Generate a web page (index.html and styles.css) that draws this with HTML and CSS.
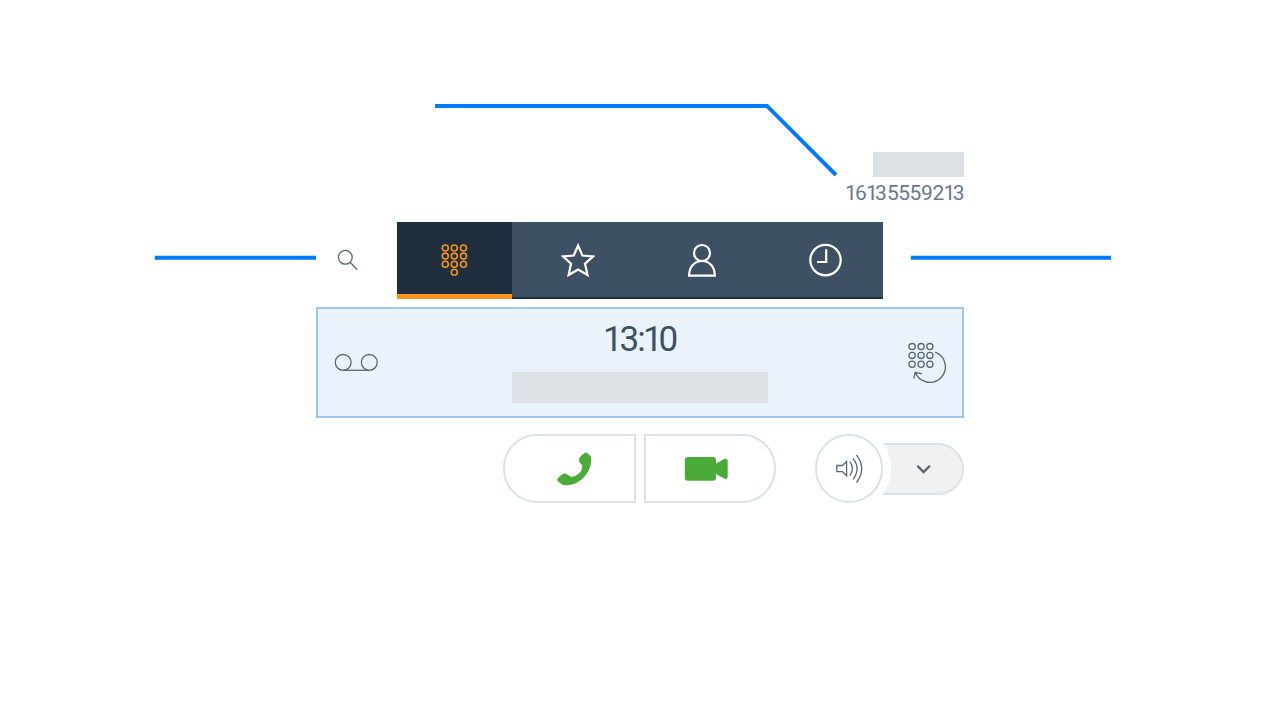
FILE: index.html
```html
<!DOCTYPE html>
<html lang="en">
<head>
<meta charset="utf-8">
<title>Phone</title>
<link rel="stylesheet" href="styles.css">
</head>
<body>
<svg class="callouts" viewBox="0 0 1280 720"><path d="M435 105.9H767L836 175M154.8 257.8H316M910.8 257.8H1111"/></svg>
<main class="phone">
  <header class="account">
    <div class="account-name"></div>
    <svg class="account-number" viewBox="844 180 120 25"><text y="200" x="845.1 854.9 866.1 875 886.9 898.2 909.5 920.9 932.4 943.5 952.8">16135559213</text></svg>
  </header>
  <nav class="toolbar">
    <button class="search" aria-label="Search"><svg viewBox="336 248 24 24"><circle cx="345.3" cy="257.3" r="6.9"/><path d="M350.2 262.2L357.2 269.8"/></svg></button>
    <div class="tabs">
      <button class="tab active" aria-label="Dialpad"><svg viewBox="438 242 34 36"><g><circle cx="445.3" cy="248" r="3"/><circle cx="454.3" cy="248" r="3"/><circle cx="463.5" cy="248" r="3"/><circle cx="445.3" cy="256.1" r="3"/><circle cx="454.3" cy="256.1" r="3"/><circle cx="463.5" cy="256.1" r="3"/><circle cx="445.3" cy="264.2" r="3"/><circle cx="454.3" cy="264.2" r="3"/><circle cx="463.5" cy="264.2" r="3"/><circle cx="454.3" cy="272.3" r="3"/></g></svg></button>
      <button class="tab" aria-label="Favourites"><svg viewBox="561 242 34 36"><path d="M578.1 245.6L582.4 255.5L593 256.5L585 263.6L587.5 275L578.1 269.5L568.6 275L571 263.6L563.1 256.5L573.7 255.5Z"/></svg></button>
      <button class="tab" aria-label="Contacts"><svg viewBox="685 242 34 36"><circle cx="702" cy="253" r="8"/><path d="M689.1 275.6H714.8C714.8 267 709.5 261 702 261S689.1 267 689.1 275.6Z"/></svg></button>
      <button class="tab" aria-label="History"><svg viewBox="809 242 34 36"><circle cx="825.5" cy="260.1" r="15.2"/><path d="M826.2 249.2V262H817"/></svg></button>
    </div>
  </nav>
  <section class="display">
    <svg class="voicemail" viewBox="334 352 46 20"><circle cx="343.2" cy="362.4" r="7.9"/><circle cx="369.3" cy="362.4" r="7.9"/><path d="M343.2 370.3H369.3"/></svg>
    <div class="status">
      <svg class="time" viewBox="512 319 256 40"><text y="351" x="603 619.5 637.3 643 658.5">13:10</text></svg>
      <div class="name"></div>
    </div>
    <svg class="redial" viewBox="906 340 42 44"><circle cx="912.1" cy="346.6" r="3.1"/><circle cx="921.1" cy="346.6" r="3.1"/><circle cx="929.9" cy="346.6" r="3.1"/><circle cx="912.1" cy="355.4" r="3.1"/><circle cx="921.1" cy="355.4" r="3.1"/><circle cx="929.9" cy="355.4" r="3.1"/><circle cx="912.1" cy="364.2" r="3.1"/><circle cx="921.1" cy="364.2" r="3.1"/><circle cx="929.9" cy="364.2" r="3.1"/><path d="M935.2 352.1A15.6 15.6 0 1 1 915.2 372.3M913.7 378.7L915.2 372.3L922 373.8"/></svg>
  </section>
  <section class="actions">
    <button class="call audio" aria-label="Call"><svg viewBox="553 448 42 42"><path d="M585.8 452.2C587.4 453.1 589.6 454.8 590.8 456.4C592.6 464 588.6 473.3 581.8 479.2C576.2 484 570.6 485.5 564.7 485.3C562 484.8 558.7 482.2 556.8 479.9C558.2 477.5 560.9 475 563.8 473.6C566.3 473.1 568.3 475.5 571.2 476.9C574.5 476.6 577.5 475.2 579.6 472.8C581.4 470.7 582.4 468.3 582.2 465.4C580.6 463.4 579 461.9 579 459.7C579.5 456.5 582.9 453.9 585.8 452.2Z"/></svg></button>
    <button class="call video" aria-label="Video call"><svg viewBox="682 452 48 34"><path d="M688 457H713Q716 457 716 460V463.5L724.5 458.8Q727.7 458 727.7 461V476.5Q727.7 480 724.5 478.7L716 474V477.8Q716 480.8 713 480.8H688Q684.8 480.8 684.8 477.8V460Q684.8 457 688 457Z"/></svg></button>
    <div class="audio-control">
      <button class="speaker" aria-label="Speaker"><svg viewBox="834 452 32 34"><path d="M836.8 465.5H842.5L846.6 461.5V475.8L842.5 471.6H836.8Z M849.8 461.6Q855.2 468.6 849.8 475.6 M853 458.3Q861.2 468.6 853 479.3 M856.4 454.9Q867 468.6 856.4 482.7"/></svg></button>
      <button class="device" aria-label="Audio device"><svg viewBox="914 460 20 18"><path d="M917.4 465.7L923.6 472L929.9 465.7"/></svg></button>
    </div>
  </section>
</main>
</body>
</html>
```
FILE: styles.css
```css
* { box-sizing: border-box; }
body { margin: 0; background: #fff; font-family: Roboto, sans-serif; width: 1280px; height: 720px; overflow: hidden; }
button { border: 0; margin: 0; padding: 0; background: none; }
svg { display: block; fill: none; flex: none; }
.callouts { position: absolute; left: 0; top: 0; width: 1280px; height: 720px; stroke: #007aff; stroke-width: 4; pointer-events: none; }
.phone { width: 648.7px; margin: 0 0 0 315.6px; padding-top: 152.3px; }
.account { height: 69.4px; display: flex; flex-direction: column; align-items: flex-end; }
.account-name { width: 91px; height: 24.7px; background: #dce1e5; }
.account-number { width: 120px; height: 25px; fill: #6b778c; font-size: 21px; margin: 3px .3px 0 0; overflow: visible; }
.toolbar { display: flex; height: 77.2px; }
.search { width: 81px; display: flex; align-items: center; padding: 0 0 0 20.4px; }
.search svg { width: 24px; height: 24px; stroke: #596773; stroke-width: 1.3; }
.tabs { display: flex; width: 486.8px; background: #3d5064; }
.tab { width: 123.8px; display: flex; align-items: flex-start; padding: 20.3px 0 0 48.9px; border-bottom: 2px solid #1e2e3c; }
.tab:last-child { width: 123.7px; }
.tab svg { width: 34px; height: 36px; stroke: #fff; stroke-width: 2.2; }
.tab.active { width: 115.5px; padding-left: 41.4px; background: #1e2e3c; border-bottom: 5px solid #f7931e; }
.tab.active svg { stroke: #f7931e; stroke-width: 1.6; }
.display { height: 111px; margin-top: 8.4px; padding-left: 16.4px; display: flex; align-items: flex-start; background: #eaf3fb; border: 2px solid #9dc8ea; }
.display .voicemail, .display .redial { stroke: #5b6873; stroke-width: 1.3; }
.voicemail { width: 46px; height: 20px; margin-top: 42.7px; }
.redial { width: 42px; height: 44px; margin-top: 30.7px; }
.status { width: 256px; margin: 0 138px 0 132px; }
.time { width: 256px; height: 40px; font-size: 35px; fill: #3d5064; margin-top: 9.7px; }
.name { width: 256px; height: 30.4px; background: #dce1e5; margin-top: 13.4px; }
.actions { display: flex; align-items: center; height: 68.5px; margin: 16.2px 0 0 187.9px; }
.call { width: 132.4px; height: 68.5px; border: 2px solid #dce1e6; background: #fff; display: flex; align-items: center; }
.call svg { fill: #4bab39; }
.audio { border-radius: 34px 0 0 34px; padding-left: 47.5px; }
.audio svg { width: 42px; height: 42px; }
.video { border-radius: 0 34px 34px 0; margin-left: 8.2px; padding-left: 35.7px; }
.video svg { width: 48px; height: 34px; }
.audio-control { display: flex; align-items: center; margin-left: 38.3px; }
.speaker { width: 68.5px; height: 68.5px; border: 2px solid #dce1e6; border-radius: 50%; background: #fff; z-index: 1; box-shadow: 0 0 0 8px #fff; display: flex; align-items: center; padding-left: 17px; }
.speaker svg { width: 32px; height: 34px; stroke: #5b6873; stroke-width: 1.3; }
.device { width: 80.9px; height: 51.6px; border: 2px solid #dce1e6; border-left: 0; border-radius: 0 26px 26px 0; background: #f1f1f1; display: flex; align-items: center; padding-left: 30.5px; }
.device svg { width: 20px; height: 18px; stroke: #56616c; stroke-width: 2.3; }
```
